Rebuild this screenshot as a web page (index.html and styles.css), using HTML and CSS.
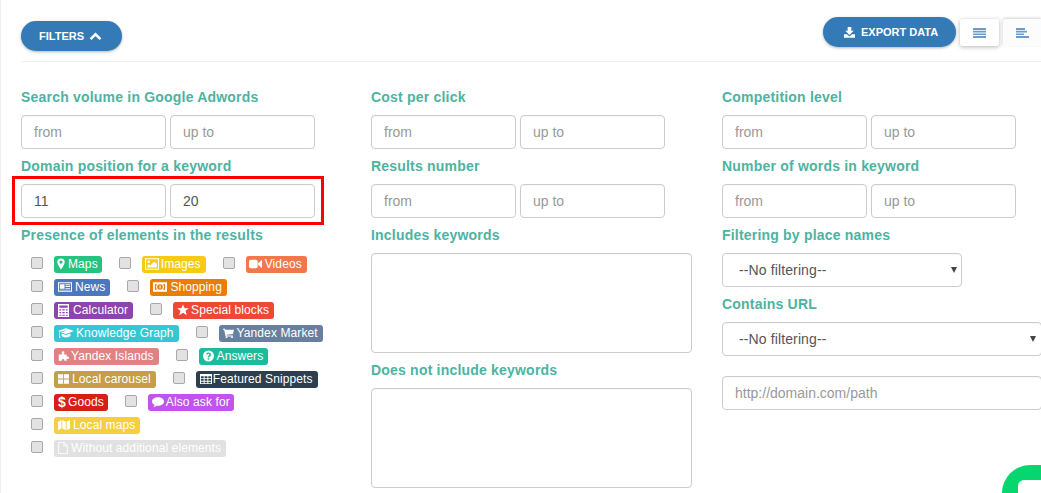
FILE: index.html
```html
<!DOCTYPE html>
<html lang="en">
<head>
<meta charset="utf-8">
<title>Filters</title>
<link rel="stylesheet" href="styles.css">
</head>
<body>
<div class="page">
  <header class="toolbar">
    <button class="btn btn-filters" type="button">FILTERS
      <svg class="btn-chevron" viewBox="0 0 14 10"><path d="M1.5 8 7 2.500 12.500 8" fill="none" stroke="#fff" stroke-width="2.800"/></svg>
    </button>
    <div class="toolbar-right">
      <button class="btn btn-export" type="button">
        <svg class="btn-download" viewBox="0 0 12 12"><path d="M4 0h4v4.200h2.600L6 8.600 1.400 4.200H4z" fill="#fff"/><path d="M0 8h3.200L6 10.400 8.800 8H12v3.600H0z" fill="#fff"/></svg>
        EXPORT DATA
      </button>
      <button class="view view-a" type="button">
        <svg class="view-icon" viewBox="0 0 13 10"><path d="M0 0h13v2H0zM0 2.800h13v1.600H0zM0 5.400h13v1.600H0zM0 8h13v2H0z" fill="#6f9bcb"/></svg>
      </button>
      <button class="view view-b" type="button">
        <svg class="view-icon" viewBox="0 0 13 10"><path d="M0 0h9v2H0zM0 2.800h11v1.600H0zM0 5.400h8v1.600H0zM0 8h13v2H0z" fill="#6f9bcb"/></svg>
      </button>
    </div>
  </header>

  <main class="filters">
    <section class="col">
      <label class="field-label">Search volume in Google Adwords</label>
      <div class="pair">
        <input class="control half" placeholder="from">
        <input class="control half" placeholder="up to">
      </div>
      <label class="field-label">Domain position for a keyword</label>
      <div class="pair pair-marked">
        <input class="control half" value="11">
        <input class="control half" value="20">
      </div>
      <label class="field-label">Presence of elements in the results</label>
      <div class="chips">
        <div class="chip-row">
          <input type="checkbox" class="check"><span class="chip c-maps"><svg class="ic" viewBox="2 0 10 14"><path fill-rule="evenodd" d="M7 0a4.600 4.600 0 0 1 4.600 4.600C11.600 7.500 8.500 11.800 7 14 5.500 11.800 2.400 7.500 2.400 4.600A4.600 4.600 0 0 1 7 0zm0 2.600a2 2 0 1 0 0 4 2 2 0 0 0 0-4z"/></svg>Maps</span>
          <input type="checkbox" class="check"><span class="chip c-images"><svg class="ic" viewBox="0 0 16 13"><path fill-rule="evenodd" d="M0 0h16v13H0zm1.200 1.200v10.600h13.600V1.200z"/><circle cx="4.200" cy="4" r="1.500"/><path d="M2.500 10.500V8.600L4.500 6.800 6 8.200 10.500 3.600 13.500 6.600V10.500z"/></svg>Images</span>
          <input type="checkbox" class="check"><span class="chip c-videos"><svg class="ic" viewBox="0 0 15 12"><rect x="0" y="1" width="10" height="10" rx="2"/><path d="M10.500 5 15 1.200V10.800L10.500 7z"/></svg>Videos</span>
        </div>
        <div class="chip-row">
          <input type="checkbox" class="check"><span class="chip c-news"><svg class="ic" viewBox="0 0 15 12"><path fill-rule="evenodd" d="M0 1h15v10H0zm1 1v8h13V2z"/><path d="M2 3h5v5H2zM8 3h5v1H8zM8 5h5v1H8zM8 7h5v1H8zM2 9h11v.6H2z"/></svg>News</span>
          <input type="checkbox" class="check"><span class="chip c-shopping"><svg class="ic" viewBox="0 0 15 12"><path fill-rule="evenodd" d="M0 1h15v10H0zm7.500 2a3 3 0 1 0 0 6 3 3 0 0 0 0-6zM2 3v6h2.500a4.200 4.200 0 0 1 0-6zm8.500 0a4.200 4.200 0 0 1 0 6H13V3z"/><rect x="7" y="4.500" width="1.200" height="3"/></svg>Shopping</span>
        </div>
        <div class="chip-row">
          <input type="checkbox" class="check"><span class="chip c-calc"><svg class="ic" viewBox="0 0 12 14"><path fill-rule="evenodd" d="M0 0h12v14H0zm1.500 1.500v2.500h9V1.500zm0 4v1.600h2V5.500zm3.200 0v1.600h2.600V5.500zm3.800 0v1.600h2V5.500zm-7 3v1.600h2V8.500zm3.200 0v1.600h2.600V8.500zm3.800 0v1.600h2V8.500zm-7 3v1.300h2v-1.300zm3.200 0v1.300h2.600v-1.300zm3.800 0v1.300h2v-1.300z"/></svg>Calculator</span>
          <input type="checkbox" class="check"><span class="chip c-special"><svg class="ic" viewBox="0 0 14 14"><path d="M7 .5 9 5h4.800l-3.800 3 1.400 5L7 10.200 2.600 13 4 8 .2 5H5z"/></svg>Special blocks</span>
        </div>
        <div class="chip-row">
          <input type="checkbox" class="check"><span class="chip c-know"><svg class="ic" viewBox="0 0 17 12"><path d="M8.500 1 17 4 8.500 7 3 5.100 8.300 4 8 3.400 2 4.700 0 4z"/><path d="M3.800 6.500 8.500 8.100 13.200 6.500V9c-2 2.400-7.400 2.400-9.400 0zM1.500 5.200V9L.8 11h2L2.100 9V5z"/></svg>Knowledge Graph</span>
          <input type="checkbox" class="check"><span class="chip c-market"><svg class="ic" viewBox="0 0 14 13"><path d="M0 1h2.500l.4 1.400H14l-1.300 5.400-8.200.9.300 1H12.500v1.300H3.300L1.500 2.300H0z"/><circle cx="4.500" cy="11.800" r="1.200"/><circle cx="11.500" cy="11.800" r="1.200"/></svg>Yandex Market</span>
        </div>
        <div class="chip-row">
          <input type="checkbox" class="check"><span class="chip c-islands"><svg class="ic" viewBox="0 0 14 14"><path d="M5 3.500c-.9-1-.5-2.500 1.400-2.500s2.300 1.500 1.400 2.500V5H11v3c1-.8 3-.5 3 1.200s-2 2-3 1.300V13H7.800c.7-1 .3-2.300-1.300-2.300S4.500 12 5.200 13H1V5h4z"/></svg>Yandex Islands</span>
          <input type="checkbox" class="check"><span class="chip c-answers"><svg class="ic" viewBox="0 0 14 14"><path fill-rule="evenodd" d="M7 0a7 7 0 1 1 0 14A7 7 0 0 1 7 0zM6 9.800v2h2v-2zM7 2.500C5.400 2.500 4.200 3.300 3.800 4.500l1.500.8C5.600 4.600 6.100 4.200 7 4.200c.8 0 1.300.4 1.300.9 0 .6-.5.9-1.100 1.300C6.500 6.800 6 7.300 6 8.300V9h2v-.5c0-.4.3-.7.9-1C9.700 7 10.200 6.300 10.200 5.100 10.200 3.500 8.800 2.500 7 2.500z"/></svg>Answers</span>
        </div>
        <div class="chip-row">
          <input type="checkbox" class="check"><span class="chip c-carousel"><svg class="ic" viewBox="0 0 13 11"><path d="M0 0h6v5H0zM7 0h6v5H7zM0 6h6v5H0zM7 6h6v5H7z"/></svg>Local carousel</span>
          <input type="checkbox" class="check"><span class="chip c-featured"><svg class="ic" viewBox="0 0 13 11"><path fill-rule="evenodd" d="M0 0h13v11H0zm1 2.500v2.200h3V2.500zm4 0v2.200h3V2.500zm4 0v2.200h3V2.500zm-8 3v2h3v-2zm4 0v2h3v-2zm4 0v2h3v-2zm-8 3V10h3V8.500zm4 0V10h3V8.500zm4 0V10h3V8.500z"/></svg>Featured Snippets</span>
        </div>
        <div class="chip-row">
          <input type="checkbox" class="check"><span class="chip c-goods"><b class="dollar">$</b>Goods</span>
          <input type="checkbox" class="check"><span class="chip c-ask"><svg class="ic" viewBox="0 0 14 13"><path d="M7 1c3.900 0 7 2.200 7 5S10.900 11 7 11c-.6 0-1.200 0-1.700-.1C4.300 11.800 3 12.500 1.500 12.700 2.300 11.900 3 11 3.100 10 1.200 9.100 0 7.700 0 6c0-2.800 3.100-5 7-5z"/></svg>Also ask for</span>
        </div>
        <div class="chip-row">
          <input type="checkbox" class="check"><span class="chip c-localmaps"><svg class="ic" viewBox="0 0 14 13"><path d="M0 3 4 .8v9.700L0 12.500zM5 .8l4 2v9.700l-4-2zM10 2.800 14 .8v9.700l-4 2z"/></svg>Local maps</span>
        </div>
        <div class="chip-row">
          <input type="checkbox" class="check"><span class="chip c-none"><svg class="ic" viewBox="0 0 11 14"><path fill-rule="evenodd" d="M0 0h7l4 4v10H0zm1 1v12h9V5H6V1zm6 .4V4h2.600z"/></svg>Without additional elements</span>
        </div>
      </div>
    </section>

    <section class="col">
      <label class="field-label">Cost per click</label>
      <div class="pair">
        <input class="control half" placeholder="from">
        <input class="control half" placeholder="up to">
      </div>
      <label class="field-label">Results number</label>
      <div class="pair">
        <input class="control half" placeholder="from">
        <input class="control half" placeholder="up to">
      </div>
      <label class="field-label">Includes keywords</label>
      <textarea class="control area"></textarea>
      <label class="field-label">Does not include keywords</label>
      <textarea class="control area"></textarea>
    </section>

    <section class="col">
      <label class="field-label">Competition level</label>
      <div class="pair">
        <input class="control half" placeholder="from">
        <input class="control half" placeholder="up to">
      </div>
      <label class="field-label">Number of words in keyword</label>
      <div class="pair">
        <input class="control half" placeholder="from">
        <input class="control half" placeholder="up to">
      </div>
      <label class="field-label">Filtering by place names</label>
      <div class="select-wrap select-short">
        <select class="control select"><option>--No filtering--</option></select>
      </div>
      <label class="field-label">Contains URL</label>
      <div class="select-wrap select-long">
        <select class="control select"><option>--No filtering--</option></select>
      </div>
      <input class="control url" placeholder="http://domain.com/path">
    </section>
  </main>
</div>
<div class="chat-widget"><span class="chat-inner"></span></div>
</body>
</html>
```
FILE: styles.css
```css
* { box-sizing: border-box; }
html, body { margin: 0; height: 100%; overflow: hidden; background: #fff; }
body { font-family: "Liberation Sans", Arial, sans-serif; font-size: 14px; color: #555; position: relative; }

.page { border-left: 1px solid #f0f0f0; padding: 17px 0 0 20px; height: 493px; overflow: hidden; }

.toolbar { display: flex; justify-content: space-between; align-items: flex-start; height: 45px; border-bottom: 1px solid #eee; }
.toolbar-right { display: flex; align-items: flex-start; width: 218px; }

.btn { border: 0; background: #337ab7; color: #fff; font: bold 11px "Liberation Sans", Arial, sans-serif; border-radius: 15px; height: 30px; box-shadow: 0 1px 3px rgba(0,0,0,.3); display: flex; align-items: center; padding: 0; }
.btn-filters { width: 101px; margin-top: 4px; padding-left: 18px; gap: 5px; }
.btn-chevron { width: 13px; height: 9px; }
.btn-export { width: 133px; padding-left: 21px; gap: 6px; flex: none; }
.btn-download { width: 11px; height: 11px; }

.view { border: 0; background: #fff; height: 27px; margin-top: 2px; padding: 0; display: flex; align-items: center; flex: none; }
.view-a { width: 39px; margin-left: 4px; justify-content: center; border-radius: 2px; box-shadow: 0 1px 4px rgba(0,0,0,.3); }
.view-b { width: 38px; margin-left: 4px; background: #fcfcfc; border-radius: 2px 0 0 0; box-shadow: 0 -1px 3px rgba(0,0,0,.18); padding-left: 13px; }
.view-icon { width: 13px; height: 10px; }

.filters { display: grid; grid-template-columns: 350px 351px 320px; margin-top: 25px; }
.col { display: flex; flex-direction: column; align-items: flex-start; }
.col > .field-label:first-child { margin-top: 0; }

.field-label { display: block; height: 20px; line-height: 20px; margin: 7px 0 8px; color: #4db3a2; font-weight: bold; font-size: 14px; letter-spacing: .2px; white-space: nowrap; }

.pair { display: flex; gap: 4px; position: relative; }
.pair-marked::after { content: ""; position: absolute; top: -8px; right: -9px; bottom: -7px; left: -9px; border: 3px solid #f00; pointer-events: none; }

.control { display: block; border: 1px solid #ccc; border-radius: 4px; background: #fff; color: #555; font: 14px "Liberation Sans", Arial, sans-serif; height: 34px; padding: 6px 12px; margin: 0; outline: 0; box-shadow: inset 0 1px 1px rgba(0,0,0,.03); }
.control::placeholder { color: #999; opacity: 1; }
.half { width: 145px; }
.area { width: 321px; height: 100px; resize: none; }
.url { width: 320px; margin-top: 20px; }

.select-wrap { position: relative; }
.select-wrap::after { content: ""; position: absolute; top: 14px; right: 5px; border-left: 3px solid transparent; border-right: 3px solid transparent; border-top: 6px solid #444; pointer-events: none; }
.select-short { width: 240px; }
.select-long { width: 320px; }
.select-long::after { right: 6px; }
.select { appearance: none; -webkit-appearance: none; width: 100%; padding-left: 16px; letter-spacing: .12px; }

.chips { display: flex; flex-direction: column; gap: 6px; margin-top: 3px; padding-left: 10px; }
.chip-row { display: flex; align-items: center; height: 17px; }
.check { appearance: none; -webkit-appearance: none; width: 12px; height: 12px; margin: 0 11px 3px 0; border: 1px solid #a8a8a8; border-radius: 2px; background: #e2e2e2; flex: none; }
.chip + .check { margin-left: 17px; }

.chip { display: inline-flex; align-items: center; height: 17px; padding: 0 5px 1px 3px; border-radius: 3px; color: #fff; font-size: 12px; letter-spacing: .1px; white-space: nowrap; }
.ic { width: 12px; height: 12px; margin: 0 3px 0 1px; fill: #fff; flex: none; }
.dollar { font-size: 14px; width: 7px; margin: 0 3px 0 1px; }

.c-maps { background: #26c281; padding-right: 4px; }
.c-maps .ic { width: 8px; margin-left: 0; }
.c-images { background: #f7ca18; }
.c-images .ic { width: 14px; margin: 0 2px 0 0; }
.c-videos { background: #f2784b; }
.c-videos .ic { width: 13px; margin-left: 0; }
.c-news { background: #4b77be; }
.c-news .ic { width: 14px; }
.c-shopping { background: #e87e04; }
.c-shopping .ic { width: 14px; margin-left: 0; }
.c-calc { background: #8e44ad; }
.c-calc .ic { width: 11px; height: 13px; margin-right: 4px; }
.c-special { background: #ef4836; }
.c-special .ic { margin-right: 2px; }
.c-know { background: #36c6d3; }
.c-know .ic { width: 16px; margin-right: 2px; }
.c-market { background: #67809f; }
.c-market .ic { width: 11px; }
.c-islands { background: #e08283; }
.c-islands .ic { width: 11px; margin-right: 2px; }
.c-answers { background: #1bbc9b; }
.c-answers .ic { width: 11px; }
.c-carousel { background: #c49f47; }
.c-carousel .ic { width: 11px; }
.c-featured { background: #2c3e50; }
.c-featured .ic { margin-right: 1px; }
.c-goods { background: #d91e18; padding-right: 4px; }
.c-ask { background: #bf55ec; padding-right: 4px; }
.c-ask .ic { margin-right: 2px; }
.c-localmaps { background: #f4d03f; }
.c-none { background: #e1e1e1; }
.c-none .ic { width: 10px; margin-right: 3px; }

.chat-widget { position: absolute; right: 0; bottom: 0; width: 39px; height: 28px; border-radius: 36px 0 0 0; background: #06d66e; }
.chat-inner { position: absolute; left: 16px; top: 15px; right: 0; bottom: 0; border-radius: 6px 0 0 0; background: #fff; }
```
